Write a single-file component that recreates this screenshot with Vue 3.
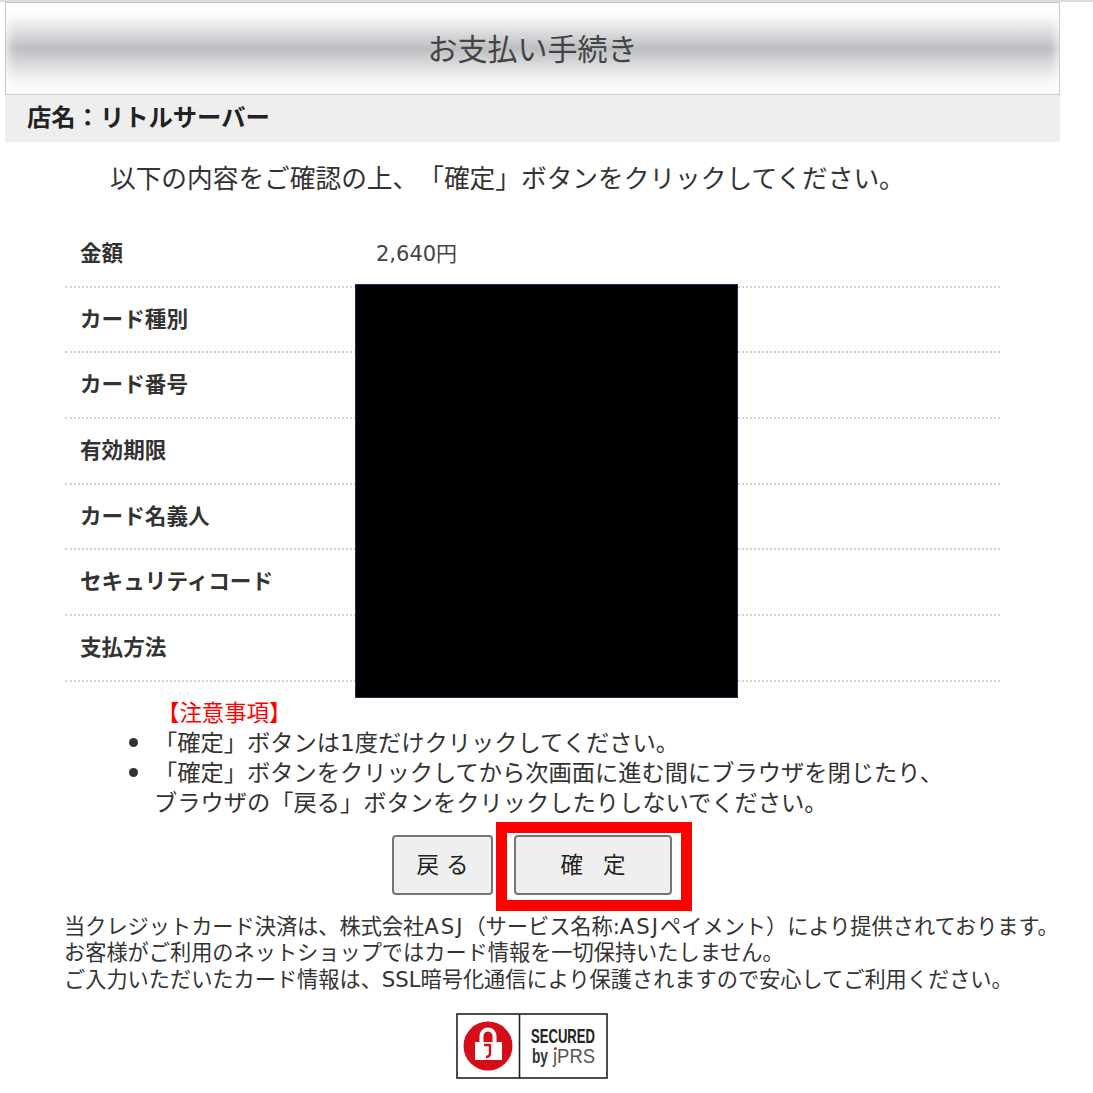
<template>
  <div class="page">
    <header class="title"><h1>お支払い手続き</h1></header>
    <div class="shop">店名&#xFF1A;リトルサーバー</div>
    <p class="intro">以下の内容をご確認の上、「確定」ボタンをクリックしてください。</p>

    <div class="details">
      <div v-for="row in rows" :key="row.label" class="row">
        <div class="label">{{ row.label }}</div>
        <div class="value">{{ row.value }}</div>
      </div>
      <div class="redaction"></div>
    </div>

    <div class="notes">
      <div class="notice">【注意事項】</div>
      <ul>
        <li>「確定」ボタンは1度だけクリックしてください。</li>
        <li>「確定」ボタンをクリックしてから次画面に進む間にブラウザを閉じたり、<br />ブラウザの「戻る」ボタンをクリックしたりしないでください。</li>
      </ul>
    </div>

    <div class="actions">
      <button class="btn back" type="button">戻 る</button>
      <span class="confirm-wrap">
        <button class="btn confirm" type="button">確定</button>
        <span class="highlight"></span>
      </span>
    </div>

    <div class="footer-text">
      <p>当クレジットカード決済は、株式会社<span class="latin">ASJ</span>&#xFF08;サービス名称:<span class="latin">ASJ</span>ペイメント&#xFF09;により提供されております。</p>
      <p>お客様がご利用のネットショップではカード情報を一切保持いたしません。</p>
      <p>ご入力いただいたカード情報は、SSL暗号化通信により保護されますので安心してご利用ください。</p>
    </div>

    <div class="seal-row">
      <svg class="seal" width="152" height="66" viewBox="0 0 152 66" role="img" aria-label="SECURED by JPRS">
        <rect x="1" y="1" width="150" height="64" fill="#fff" stroke="#222" stroke-width="1.6" />
        <line x1="63.5" y1="1" x2="63.5" y2="65" stroke="#222" stroke-width="1.6" />
        <circle cx="32" cy="33" r="24.5" fill="#d40d19" />
        <path d="M25.5 30v-7a6.5 6.5 0 0 1 13 0v7" fill="none" stroke="#fff" stroke-width="4" />
        <rect x="19" y="29" width="27" height="18" fill="#fff" />
        <path d="M28 32h7M34 32v8q0 4-4 4" fill="none" stroke="#d40d19" stroke-width="2.4" />
        <text x="75" y="30" class="seal-top" textLength="64" lengthAdjust="spacingAndGlyphs">SECURED</text>
        <text x="76" y="50" class="seal-by" textLength="16" lengthAdjust="spacingAndGlyphs">by</text>
        <text x="97" y="50" class="seal-jprs" textLength="42" lengthAdjust="spacingAndGlyphs">jPRS</text>
        <circle cx="99.5" cy="35.5" r="1.3" fill="#d40d19" />
      </svg>
    </div>
  </div>
</template>

<script setup>
const rows = [
  { label: '金額', value: '2,640円' },
  { label: 'カード種別', value: '' },
  { label: 'カード番号', value: '' },
  { label: '有効期限', value: '' },
  { label: 'カード名義人', value: '' },
  { label: 'セキュリティコード', value: '' },
  { label: '支払方法', value: '' }
]
</script>

<style>
html, body { margin: 0; background: #fff; }
</style>

<style scoped>
.page {
  width: 1093px;
  height: 1093px;
  overflow: hidden;
  box-sizing: border-box;
  border-top: 2px solid #d5dedb;
  font-family: "DejaVu Sans", "Noto Sans CJK JP", sans-serif;
  text-spacing-trim: space-all;
  color: #333;
}
.title {
  box-sizing: border-box;
  width: 1055px;
  height: 93px;
  margin-left: 5px;
  border: 1px solid #c6cacd;
  background: linear-gradient(to bottom, #fff 0%, #fdfdfd 12%, #dfe0e2 30%, #bcbec1 50%, #d6d8da 66%, #f6f6f6 86%, #fff 100%);
  box-shadow: inset 0 0 12px 1px #fff;
  display: flex;
  align-items: center;
  justify-content: center;
}
.title h1 {
  margin: 2px 0 0;
  font-size: 30px;
  font-weight: 400;
  line-height: 1;
  color: #444;
}
.shop {
  box-sizing: border-box;
  width: 1055px;
  height: 47px;
  margin-left: 5px;
  padding-left: 22px;
  background: #eee;
  font-size: 24.3px;
  font-weight: 700;
  line-height: 46px;
  color: #222;
}
.intro {
  margin: 0;
  padding: 18px 0 0 110px;
  height: 62px;
  box-sizing: content-box;
  font-size: 25.7px;
  line-height: 38px;
  color: #333;
  white-space: nowrap;
}
.details {
  position: relative;
  width: 935px;
  margin-left: 65px;
}
.row {
  display: grid;
  grid-template-columns: 311px 1fr;
  align-items: center;
  height: 65.7px;
  box-sizing: border-box;
  border-bottom: 2px dotted #d2d2d2;
}
.label {
  padding-left: 15px;
  font-size: 21.6px;
  font-weight: 700;
  color: #333;
  line-height: 30px;
}
.value {
  font-size: 21px;
  line-height: 30px;
  color: #444;
}
.redaction {
  position: absolute;
  left: 290px;
  top: 62px;
  width: 383px;
  height: 414px;
  box-sizing: border-box;
  background: #000;
  border: 1px solid #1c3050;
}
.notes {
  padding-left: 154px;
  font-size: 23.25px;
  line-height: 30px;
  color: #333;
  margin-top: 16px;
}
.notice {
  color: #f00;
  font-size: 22.4px;
  padding-left: 3px;
}
.notes ul {
  margin: 0;
  padding: 0;
  list-style: none;
}
.notes li { position: relative; }
.notes li::before {
  content: "";
  position: absolute;
  left: -25px;
  top: 10px;
  width: 9px;
  height: 9px;
  border-radius: 50%;
  background: #333;
}
.actions {
  display: flex;
  justify-content: center;
  gap: 21px;
  width: 1064px;
  margin-top: 17px;
}
.btn {
  height: 60px;
  box-sizing: border-box;
  background: #efefef;
  border: 2px solid #767676;
  border-radius: 4px;
  font-family: inherit;
  font-size: 22.5px;
  color: #222;
  padding: 0 0 4px;
}
.back { width: 101px; }
.confirm {
  width: 158px;
  display: block;
  letter-spacing: 20px;
  padding-left: 20px;
}
.confirm-wrap { position: relative; display: block; }
.highlight {
  position: absolute;
  left: -18px;
  top: -13px;
  width: 196px;
  height: 89px;
  box-sizing: border-box;
  border: 11px solid #f00;
  pointer-events: none;
}
.footer-text {
  margin-top: 19px;
  padding-left: 64px;
  font-size: 21.2px;
  line-height: 26.5px;
  color: #333;
  white-space: nowrap;
}
.footer-text p { margin: 0; }
.latin { letter-spacing: 2px; }
.seal-row {
  margin-top: 20px;
  padding-left: 456px;
}
.seal { display: block; }
.seal-top {
  font-family: "Liberation Sans", sans-serif;
  font-size: 21px;
  font-weight: 700;
  fill: #222;
}
.seal-by {
  font-family: "Liberation Sans", sans-serif;
  font-size: 20px;
  font-weight: 700;
  fill: #333;
}
.seal-jprs {
  font-family: "Liberation Sans", sans-serif;
  font-size: 20px;
  fill: #555;
}
</style>
